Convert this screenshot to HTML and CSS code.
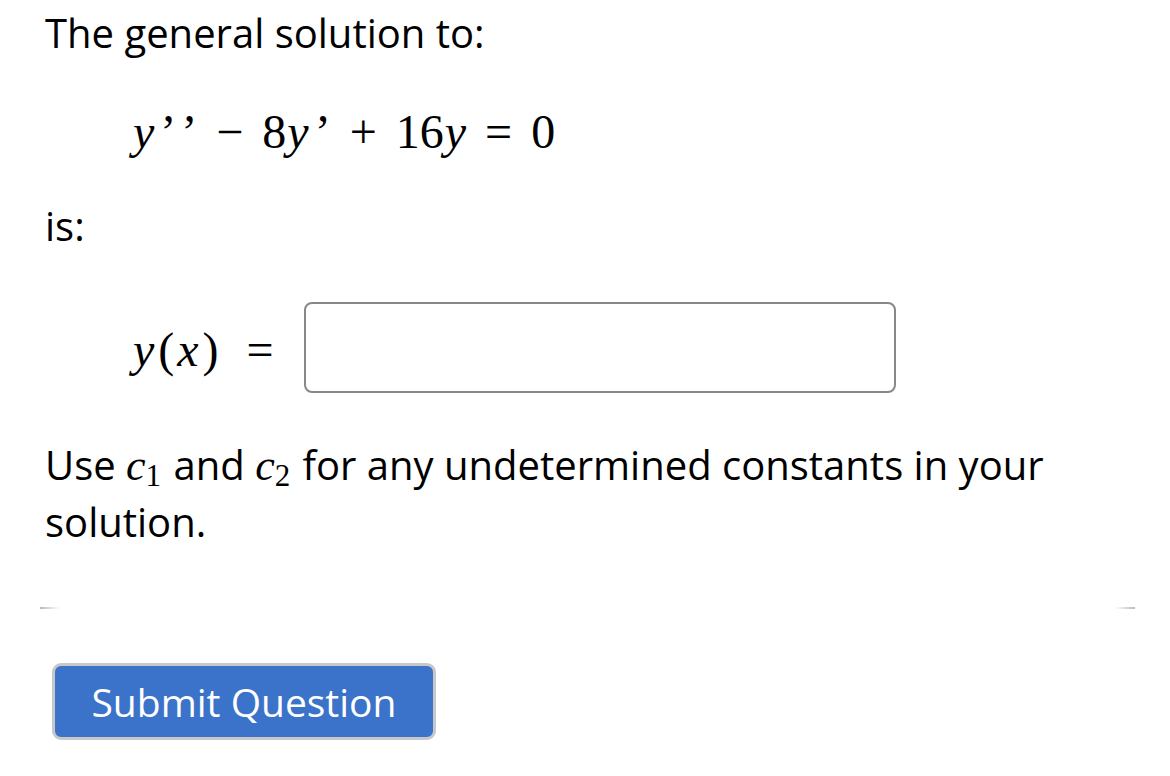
FILE: index.html
```html
<!DOCTYPE html>
<html>
<head>
<meta charset="utf-8">
<link rel="stylesheet" href="styles.css">
</head>
<body>
<div class="page">
  <p class="text first">The general solution to:</p>
  <div class="eq">
    <span class="mi">y</span><span class="pr">’</span><span class="pr">’</span><span class="op">−</span><span class="mn">8</span><span class="mi">y</span><span class="pr">’</span><span class="op">+</span><span class="mn">16</span><span class="mi">y</span><span class="op">=</span><span class="mn">0</span>
  </div>
  <p class="text is">is:</p>
  <div class="answer">
    <span class="lhs"><span class="mi">y</span><span class="mn">(</span><span class="mi">x</span><span class="mn">)</span><span class="op">=</span></span>
    <input class="box" type="text">
  </div>
  <p class="text note">Use <span class="mi">c</span><span class="sub">1</span> and <span class="mi">c</span><span class="sub">2</span> for any undetermined constants in your solution.</p>
  <hr class="rule">
  <button class="submit">Submit Question</button>
</div>
</body>
</html>
```
FILE: styles.css
```css
body {
  margin: 0;
  background: #fff;
  color: #000;
  font-family: "Open Sans", sans-serif;
}
.page {
  padding: 0 35px 0 45px;
}
.text {
  margin: 0;
  font-size: 40px;
  line-height: 57px;
}
.first {
  padding-top: 4px;
}
.eq {
  font-family: "Liberation Serif", serif;
  font-size: 48px;
  padding-left: 88px;
  margin-top: 46px;
  line-height: 50px;
}
.mi {
  font-family: "Liberation Serif", serif;
  font-style: italic;
  line-height: 1;
}
.mn {
  font-family: "Liberation Serif", serif;
  line-height: 1;
}
.pr {
  font-family: "Liberation Serif", serif;
  margin-left: 5px;
  line-height: 1;
}
.mi + .pr {
  margin-left: 6px;
}
.op {
  font-family: "Liberation Serif", serif;
  margin: 0 19px;
  line-height: 1;
}
.eq .op:nth-of-type(1) {
  margin-left: 18px;
}
.eq .mn + .mi {
  margin-left: 1px;
}
.is {
  margin-top: 40px;
}
.answer {
  display: flex;
  align-items: center;
  margin-top: 48px;
  padding-left: 88px;
}
.lhs {
  font-size: 48px;
  width: 171px;
}
.lhs .mi + .mn {
  margin-left: 4px;
}
.lhs .mn + .mi {
  margin-left: 3px;
}
.lhs .op {
  margin: 0 0 0 28px;
}
.box {
  width: 592px;
  height: 91px;
  box-sizing: border-box;
  border: 2px solid #888;
  border-radius: 8px;
  margin: 0;
}
.note {
  margin-top: 43px;
}
.note .mi {
  font-size: 44px;
}
.sub {
  font-family: "Liberation Serif", serif;
  font-size: 31px;
  line-height: 1;
  vertical-align: -6px;
  margin-right: 2px;
}
.rule {
  border: 0;
  height: 2px;
  margin: 57px 0 0 -5px;
  background: linear-gradient(to right, #bbb 0, #fff 20px, #fff calc(100% - 20px), #bbb 100%);
}
.submit {
  margin-top: 54px;
  margin-left: 7px;
  width: 384px;
  height: 77px;
  background: #3a73c9;
  border: 3px solid #c8c8c8;
  border-radius: 9px;
  color: #fff;
  font-family: "Open Sans", sans-serif;
  font-size: 39px;
}
```
